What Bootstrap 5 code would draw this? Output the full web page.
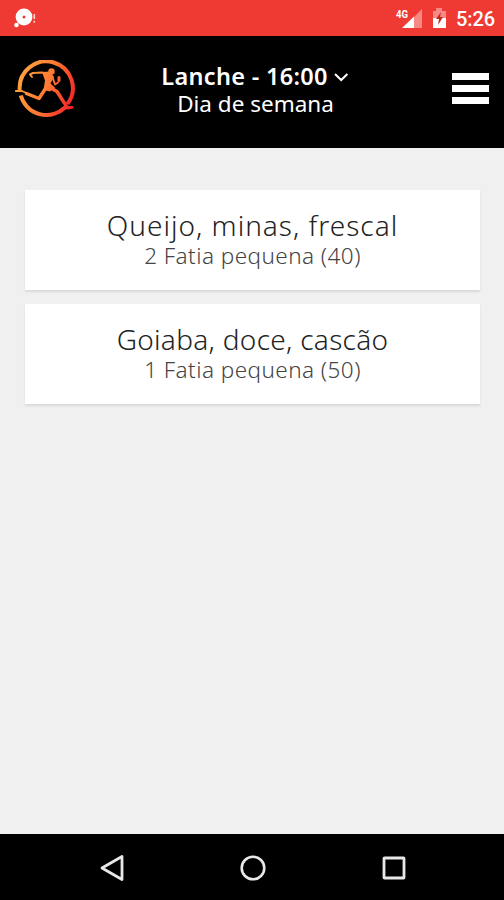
<!DOCTYPE html>
<html lang="pt-BR">
<head>
<meta charset="utf-8">
<meta name="viewport" content="width=device-width, initial-scale=1">
<title>Lanche</title>
<link href="https://cdn.jsdelivr.net/npm/bootstrap@5.3.0/dist/css/bootstrap.min.css" rel="stylesheet">
<style>
body{background:#f0f0f0;font-family:"Noto Sans","Open Sans",sans-serif;height:900px;overflow:hidden}
svg{display:block;flex:none}
.status-bar{height:36px;background:#ee3a32;padding:0 9px 0 13px}
.clock{font:500 20px/36px Roboto,sans-serif;letter-spacing:-.1px;padding-top:1px}
.app-bar{height:112px;padding:0 14px 0 13px}
.meal-picker{padding:0 18px 4px 0}
.meal{font-size:23.500px;line-height:27px;font-weight:600;letter-spacing:.3px}
.day{font-size:22.500px;line-height:27px;letter-spacing:0}
.meals{padding:42px 24px 0 25px;gap:14px}
.food{height:100px;padding-top:18px;box-shadow:0 2px 2px #d9d9d9}
.food-name{font-size:28px;line-height:34px;font-weight:300;color:#222;letter-spacing:.3px}
.food-name-wide{letter-spacing:1px}
.food-qty{font-size:22.500px;line-height:27px;font-weight:300;color:#444;letter-spacing:.45px}
.nav-keys{height:66px;padding:2px 97px 0 99px}
</style>
</head>
<body class="d-flex flex-column">
<div class="status-bar d-flex align-items-center text-white">
<svg width="24" height="20" viewBox="0 0 24 20"><circle cx="11" cy="9" r="8.4" fill="#fff"/><circle cx="11" cy="9" r="1.5" fill="#ee3a32"/><circle cx="3.500" cy="17" r="2.300" fill="#fff"/><path d="M21.300 6v5M21.300 12.700v2" stroke="#ffd2ce" stroke-width="1.600"/></svg>
<div class="d-flex align-items-center ms-auto">
<svg width="60" height="24" viewBox="0 0 60 24"><path d="M26 3v19H7z" fill="#f58a84"/><path d="M18 10.500v11.500H6z" fill="#fff"/><text x="0" y="11.500" textLength="12" lengthAdjust="spacingAndGlyphs" font-family="Roboto" font-weight="700" font-size="10.500" fill="#fff">4G</text><path d="M37 5h3V2h6v3h4v7H37z" fill="#f58a84"/><path d="M37 12h13v10H37z" fill="#fff"/><path d="M45 6l-5 7h3l-1 6 5-8h-3z" fill="#c9251f"/></svg>
<span class="clock">5:26</span>
</div>
</div>
<header class="app-bar d-flex align-items-center justify-content-between bg-black text-white">
<svg width="64" height="64" viewBox="0 0 64 64"><defs><linearGradient id="flame" gradientUnits="userSpaceOnUse" x1="6" y1="20" x2="60" y2="40"><stop stop-color="#ffa03c"/><stop offset=".5" stop-color="#ff7a32"/><stop offset="1" stop-color="#f5262a"/></linearGradient></defs>
<path d="M6.700 30A26.600 26.600 0 1 1 54.500 44M52 47.500A26.600 26.600 0 0 1 7.800 35.500" fill="none" stroke="url(#flame)" stroke-width="4"/>
<g fill="none" stroke="url(#flame)" stroke-linecap="round" stroke-linejoin="round"><path d="M34 14l-5-1.500-9 .5-3 1.500 2 2.500M39.500 17l2.500 7.500 3-2" stroke-width="2"/><path d="M46 17.500v3" stroke-width="3"/><path d="M33.500 27L26 38.500l-12.500-5M36 27l8 4.500 7 11" stroke-width="3.500"/><path d="M13.500 33L9 31H2.800M51 43l2.500 4h6" stroke-width="1.800"/></g>
<g fill="url(#flame)"><circle cx="38.500" cy="11.500" r="3.200"/><path d="M29 12l8-.5 4 5.500-3.500 6.500 4.500 4-5 4-6.500-1.500 1.500-9.500zM50 41l3 1 2.500 4.500 6 1.500-6 1.500-4-.5z"/></g></svg>
<div class="meal-picker text-center">
<div class="meal d-flex align-items-center justify-content-center"><span>Lanche - 16:00</span><svg class="ms-1" width="18" height="10" viewBox="0 0 18 10"><path d="M3 2l6.200 6 6.200-6" fill="none" stroke="#fff" stroke-width="2"/></svg></div>
<div class="day">Dia de semana</div>
</div>
<svg width="38" height="38" viewBox="0 0 38 38"><path d="M0 0h37v7H0zM0 12h37v7H0zM0 24h37v7H0z" fill="#fff"/></svg>
</header>
<main class="meals d-flex flex-column flex-grow-1 text-center">
<div class="food bg-white"><div class="food-name food-name-wide">Queijo, minas, frescal</div><div class="food-qty">2 Fatia pequena (40)</div></div>
<div class="food bg-white"><div class="food-name">Goiaba, doce, cascão</div><div class="food-qty">1 Fatia pequena (50)</div></div>
</main>
<nav class="nav-keys d-flex align-items-center justify-content-between bg-black">
<svg width="26" height="28" viewBox="0 0 26 28"><path d="M23 2.500v23L3 14z" fill="none" stroke="#e8e8e8" stroke-width="2.800" stroke-linejoin="round"/></svg>
<svg width="28" height="28" viewBox="0 0 28 28"><circle cx="14" cy="14" r="11.300" fill="none" stroke="#e8e8e8" stroke-width="2.600"/></svg>
<svg width="26" height="26" viewBox="0 0 26 26"><rect x="3" y="3" width="20" height="20" rx=".5" fill="none" stroke="#e8e8e8" stroke-width="2.800"/></svg>
</nav>
<script src="https://cdn.jsdelivr.net/npm/bootstrap@5.3.0/dist/js/bootstrap.bundle.min.js"></script>
</body>
</html>
